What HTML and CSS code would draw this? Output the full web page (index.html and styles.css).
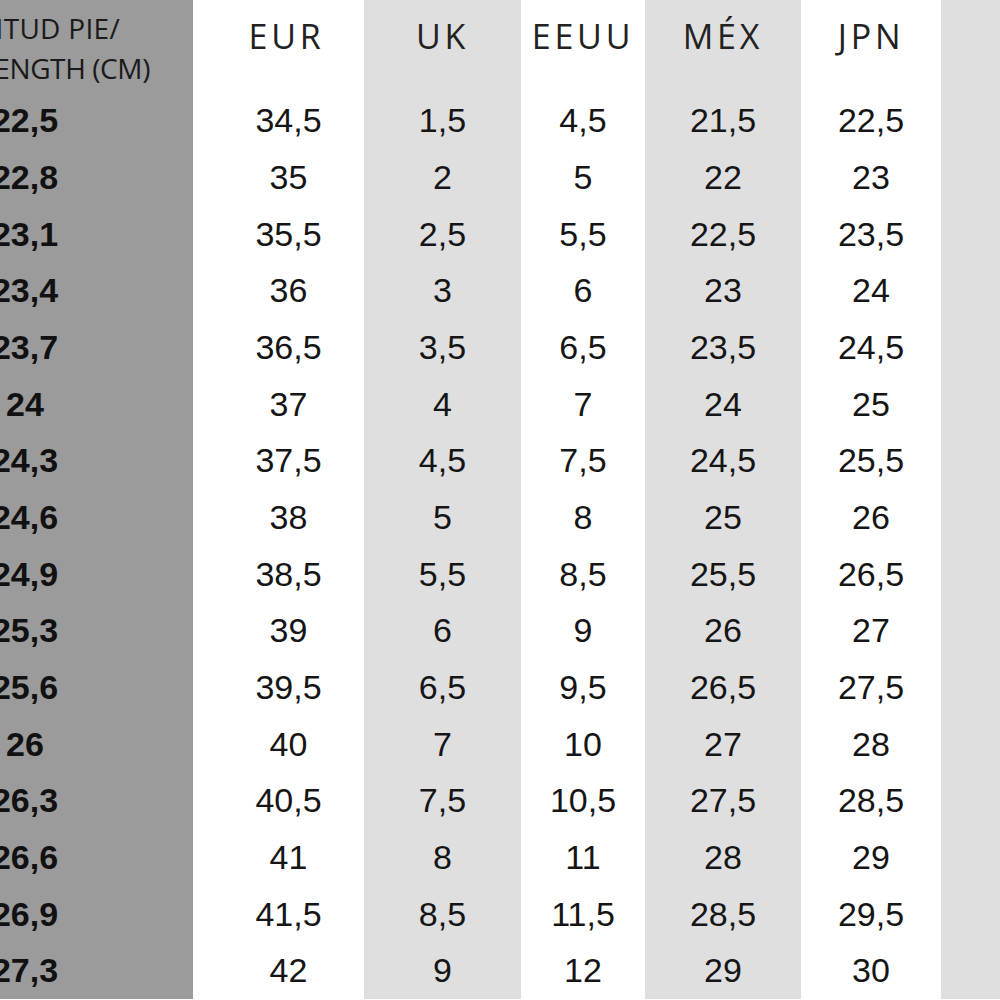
FILE: index.html
```html
<!DOCTYPE html>
<html lang="es">
<head>
<meta charset="utf-8">
<title>Tabla de tallas</title>
<link rel="stylesheet" href="styles.css">
</head>
<body>
<div class="chart">
  <div class="cell c0 head head-cm"><span class="l1">LONGITUD PIE/</span><span class="l2">FOOT LENGTH (CM)</span></div>
  <div class="cell c1 head">EUR</div>
  <div class="cell c2 head">UK</div>
  <div class="cell c3 head">EEUU</div>
  <div class="cell c4 head">MÉX</div>
  <div class="cell c5 head">JPN</div>
  <div class="cell c6 head"></div>

  <div class="cell c0">22,5</div><div class="cell c1">34,5</div><div class="cell c2">1,5</div><div class="cell c3">4,5</div><div class="cell c4">21,5</div><div class="cell c5">22,5</div><div class="cell c6"></div>
  <div class="cell c0">22,8</div><div class="cell c1">35</div><div class="cell c2">2</div><div class="cell c3">5</div><div class="cell c4">22</div><div class="cell c5">23</div><div class="cell c6"></div>
  <div class="cell c0">23,1</div><div class="cell c1">35,5</div><div class="cell c2">2,5</div><div class="cell c3">5,5</div><div class="cell c4">22,5</div><div class="cell c5">23,5</div><div class="cell c6"></div>
  <div class="cell c0">23,4</div><div class="cell c1">36</div><div class="cell c2">3</div><div class="cell c3">6</div><div class="cell c4">23</div><div class="cell c5">24</div><div class="cell c6"></div>
  <div class="cell c0">23,7</div><div class="cell c1">36,5</div><div class="cell c2">3,5</div><div class="cell c3">6,5</div><div class="cell c4">23,5</div><div class="cell c5">24,5</div><div class="cell c6"></div>
  <div class="cell c0">24</div><div class="cell c1">37</div><div class="cell c2">4</div><div class="cell c3">7</div><div class="cell c4">24</div><div class="cell c5">25</div><div class="cell c6"></div>
  <div class="cell c0">24,3</div><div class="cell c1">37,5</div><div class="cell c2">4,5</div><div class="cell c3">7,5</div><div class="cell c4">24,5</div><div class="cell c5">25,5</div><div class="cell c6"></div>
  <div class="cell c0">24,6</div><div class="cell c1">38</div><div class="cell c2">5</div><div class="cell c3">8</div><div class="cell c4">25</div><div class="cell c5">26</div><div class="cell c6"></div>
  <div class="cell c0">24,9</div><div class="cell c1">38,5</div><div class="cell c2">5,5</div><div class="cell c3">8,5</div><div class="cell c4">25,5</div><div class="cell c5">26,5</div><div class="cell c6"></div>
  <div class="cell c0">25,3</div><div class="cell c1">39</div><div class="cell c2">6</div><div class="cell c3">9</div><div class="cell c4">26</div><div class="cell c5">27</div><div class="cell c6"></div>
  <div class="cell c0">25,6</div><div class="cell c1">39,5</div><div class="cell c2">6,5</div><div class="cell c3">9,5</div><div class="cell c4">26,5</div><div class="cell c5">27,5</div><div class="cell c6"></div>
  <div class="cell c0">26</div><div class="cell c1">40</div><div class="cell c2">7</div><div class="cell c3">10</div><div class="cell c4">27</div><div class="cell c5">28</div><div class="cell c6"></div>
  <div class="cell c0">26,3</div><div class="cell c1">40,5</div><div class="cell c2">7,5</div><div class="cell c3">10,5</div><div class="cell c4">27,5</div><div class="cell c5">28,5</div><div class="cell c6"></div>
  <div class="cell c0">26,6</div><div class="cell c1">41</div><div class="cell c2">8</div><div class="cell c3">11</div><div class="cell c4">28</div><div class="cell c5">29</div><div class="cell c6"></div>
  <div class="cell c0">26,9</div><div class="cell c1">41,5</div><div class="cell c2">8,5</div><div class="cell c3">11,5</div><div class="cell c4">28,5</div><div class="cell c5">29,5</div><div class="cell c6"></div>
  <div class="cell c0">27,3</div><div class="cell c1">42</div><div class="cell c2">9</div><div class="cell c3">12</div><div class="cell c4">29</div><div class="cell c5">30</div><div class="cell c6"></div>
</div>
</body>
</html>
```

FILE: styles.css
```css
html, body {
  margin: 0;
  padding: 0;
  width: 1000px;
  height: 1000px;
  overflow: hidden;
  background: #ffffff;
}

.chart {
  display: grid;
  grid-template-columns: 336px 171px 157px 124px 156px 140px 59px;
  grid-template-rows: 92px repeat(16, 56.67px);
  margin-left: -143px;
  width: 1143px;
  height: 1000px;
  font-family: "Liberation Sans", Arial, sans-serif;
  font-size: 34px;
  color: #151515;
}

.cell {
  display: flex;
  align-items: center;
  justify-content: center;
  line-height: 1;
}

.c0 {
  background: #9b9b9b;
  font-weight: bold;
  color: #111111;
}

.c1, .c3, .c5 {
  background: #ffffff;
}

.c2, .c4, .c6 {
  background: #dfdfdf;
}

.c1 {
  padding-left: 20px;
}

.head {
  align-items: flex-start;
  padding-top: 19px;
  font-family: "Open Sans", "Noto Sans", sans-serif;
  font-weight: 400;
  font-size: 34px;
  letter-spacing: 3.8px;
  color: #222222;
}

.c1.head {
  padding-left: 16px;
}

.head-cm {
  flex-direction: column;
  align-items: flex-end;
  justify-content: flex-start;
  padding-top: 8px;
  font-family: "Open Sans", "Noto Sans", sans-serif;
  font-weight: 400;
  font-size: 28px;
  letter-spacing: 0;
  line-height: 40px;
  color: #1a1a1a;
}

.head-cm .l1 {
  margin-right: 73px;
  letter-spacing: 0.3px;
}

.head-cm .l2 {
  margin-right: 43px;
  letter-spacing: -0.4px;
}
```
